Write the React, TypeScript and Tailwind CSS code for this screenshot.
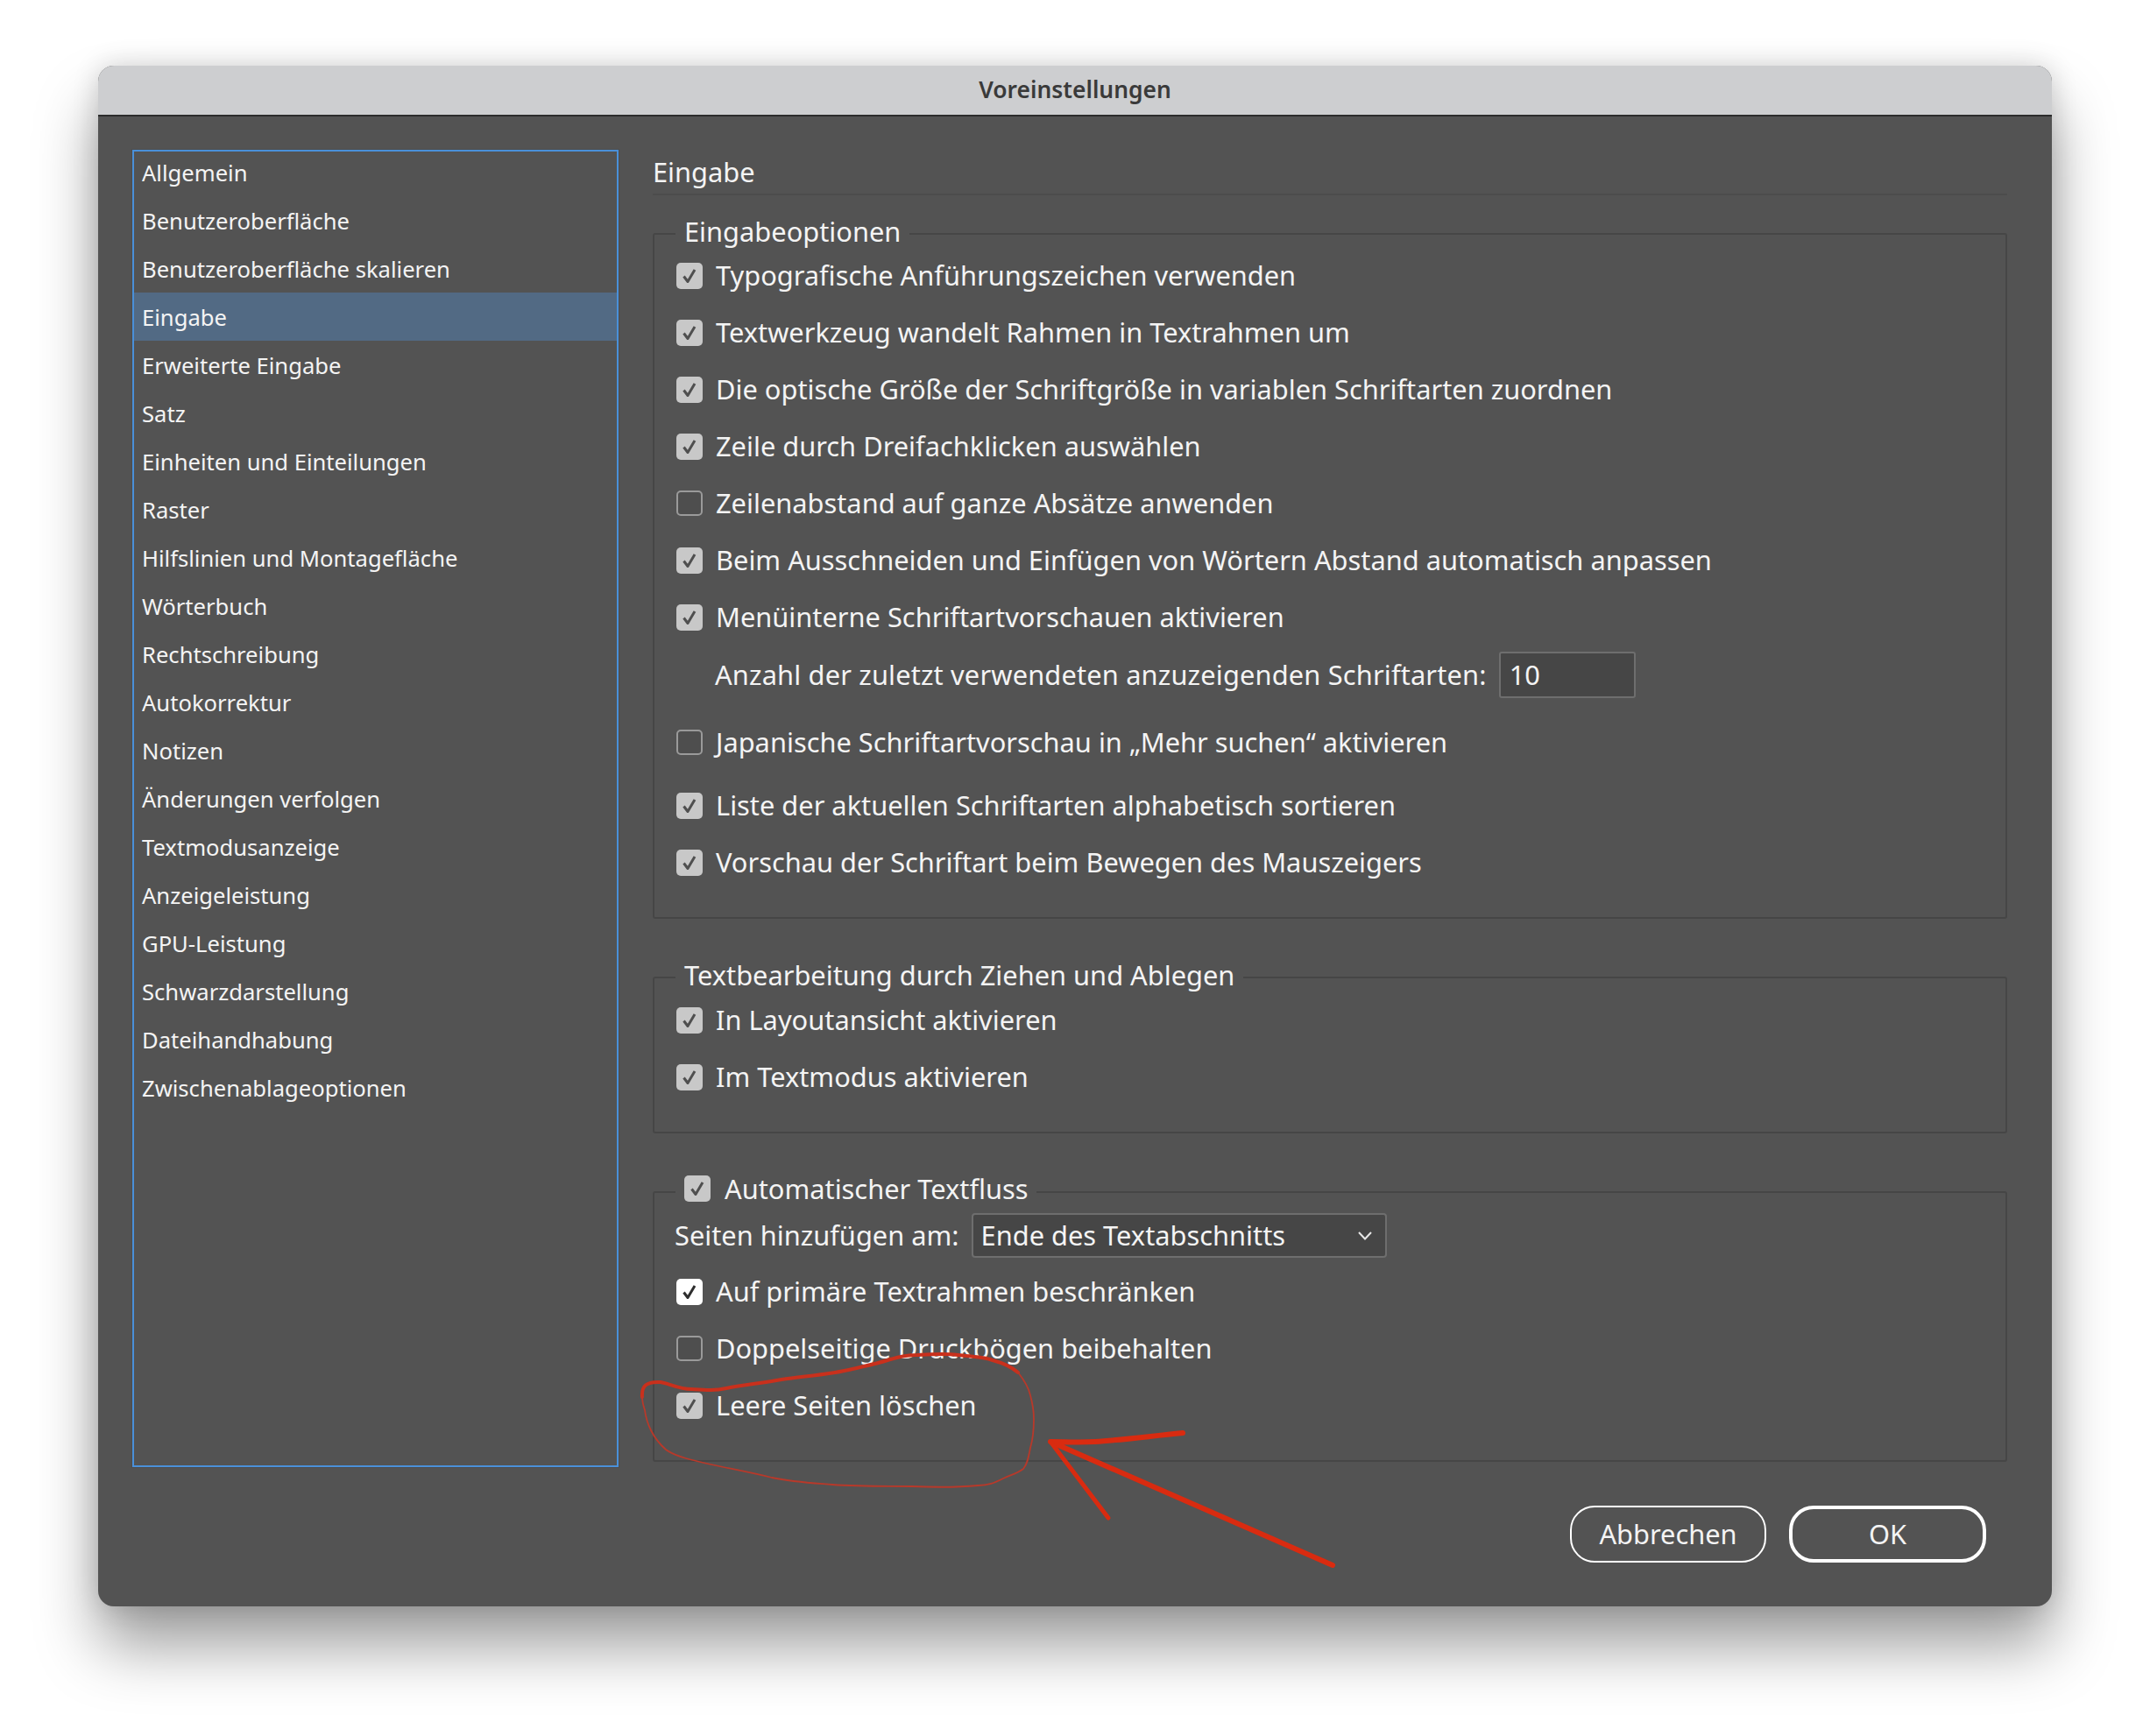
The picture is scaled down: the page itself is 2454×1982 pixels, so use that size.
const SECTIONS = [
  'Allgemein',
  'Benutzeroberfläche',
  'Benutzeroberfläche skalieren',
  'Eingabe',
  'Erweiterte Eingabe',
  'Satz',
  'Einheiten und Einteilungen',
  'Raster',
  'Hilfslinien und Montagefläche',
  'Wörterbuch',
  'Rechtschreibung',
  'Autokorrektur',
  'Notizen',
  'Änderungen verfolgen',
  'Textmodusanzeige',
  'Anzeigeleistung',
  'GPU-Leistung',
  'Schwarzdarstellung',
  'Dateihandhabung',
  'Zwischenablageoptionen',
];

type BoxState = 'on' | 'off' | 'active';

function CheckBox({ state }: { state: BoxState }) {
  if (state === 'off') {
    return <span className="h-[29px] w-[30px] shrink-0 rounded-[5px] border-2 border-[#9a9a9a] bg-[#4e4e4e]" />;
  }
  const active = state === 'active';
  return (
    <span className={`flex h-[30px] w-[30px] shrink-0 items-center justify-center rounded-[5px] ${active ? 'bg-white' : 'bg-[#c8c8c8]'}`}>
      <svg width="20" height="20" viewBox="0 0 20 20" fill="none">
        <path
          d="M3.5 10.5 L8 16.5 L16 3"
          stroke={active ? '#2e2e2e' : '#4f4f4f'}
          strokeWidth="3"
          strokeLinejoin="round"
        />
      </svg>
    </span>
  );
}

function CheckRow({ label, state = 'on', className = '' }: { label: string; state?: BoxState; className?: string }) {
  return (
    <div className={`flex h-[65px] items-center gap-[15px] pl-[25px] ${className}`}>
      <CheckBox state={state} />
      <span>{label}</span>
    </div>
  );
}

function Group({ legend, className, children }: { legend: React.ReactNode; className: string; children: React.ReactNode }) {
  return (
    <fieldset className={`rounded-[3px] border-2 border-[#464646] ${className}`}>
      <legend className="ml-[24px] h-[30px] px-[10px] leading-[24px]">{legend}</legend>
      {children}
    </fieldset>
  );
}

export default function App() {
  return (
    <div className="relative h-[1982px] w-[2454px] overflow-hidden bg-white pl-[112px] pt-[75px] font-['Noto_Sans',sans-serif] text-[30.8px] text-[#f4f4f4]">
      <div className="flex h-[1759px] w-[2230px] flex-col overflow-hidden rounded-[18px] bg-[#535353] shadow-[0_46px_70px_rgba(0,0,0,0.38),0_0_30px_rgba(0,0,0,0.16)]">
        <div className="flex h-[58px] shrink-0 items-center justify-center border-b-2 border-[#2c2c2c] bg-[#cdced0] text-[26.4px] font-semibold text-[#3a3a3a]">
          Voreinstellungen
        </div>

        <div className="flex flex-1 gap-[39px] pl-[39px] pt-[38px]">
          <ul className="h-[1504px] w-[555px] shrink-0 overflow-hidden border-2 border-[#4a90d9] text-[25.6px] ring-1 ring-[#4d4d4d]">
            {SECTIONS.map((name, i) => (
              <li
                key={name}
                className={`flex h-[55px] items-center pl-[9px] pt-[3px] ${i === 0 ? '-mt-[4px]' : ''} ${name === 'Eingabe' ? 'bg-[#526a84]' : ''}`}
              >
                {name}
              </li>
            ))}
          </ul>

          <div className="w-[1546px]">
            <div className="flex h-[52px] items-center border-b-2 border-[#4c4c4c]">Eingabe</div>

            <Group legend="Eingabeoptionen" className="mt-[29px] h-[797px]">
              <CheckRow label="Typografische Anführungszeichen verwenden" />
              <CheckRow label="Textwerkzeug wandelt Rahmen in Textrahmen um" />
              <CheckRow label="Die optische Größe der Schriftgröße in variablen Schriftarten zuordnen" />
              <CheckRow label="Zeile durch Dreifachklicken auswählen" />
              <CheckRow label="Zeilenabstand auf ganze Absätze anwenden" state="off" />
              <CheckRow label="Beim Ausschneiden und Einfügen von Wörtern Abstand automatisch anpassen" />
              <CheckRow label="Menüinterne Schriftartvorschauen aktivieren" />
              <div className="mt-[1px] flex h-[64px] items-center gap-[14px] pl-[69px]">
                <span className="tracking-[0.16px]">Anzahl der zuletzt verwendeten anzuzeigenden Schriftarten:</span>
                <div className="flex h-[53px] w-[156px] items-center rounded-[3px] border-2 border-[#6e6e6e] bg-[#464646] pl-[10px]">10</div>
              </div>
              <CheckRow label="Japanische Schriftartvorschau in „Mehr suchen“ aktivieren" state="off" className="mt-[13px]" />
              <CheckRow label="Liste der aktuellen Schriftarten alphabetisch sortieren" className="mt-[7px]" />
              <CheckRow label="Vorschau der Schriftart beim Bewegen des Mauszeigers" />
            </Group>

            <Group legend="Textbearbeitung durch Ziehen und Ablegen" className="mt-[52px] h-[193px]">
              <CheckRow label="In Layoutansicht aktivieren" className="mt-[1px]" />
              <CheckRow label="Im Textmodus aktivieren" />
            </Group>

            <Group
              legend={
                <span className="relative -top-[4px] flex items-center gap-[16px]">
                  <CheckBox state="on" />
                  Automatischer Textfluss
                </span>
              }
              className="mt-[52px] h-[323px]"
            >
              <div className="mt-[9px] flex h-[51px] items-center gap-[14px] pl-[23px]">
                <span>Seiten hinzufügen am:</span>
                <div className="flex h-[51px] w-[474px] items-center justify-between rounded-[4px] border-2 border-[#6e6e6e] bg-[#464646] pl-[9px] pr-[14px]">
                  <span>Ende des Textabschnitts</span>
                  <svg width="18" height="12" viewBox="0 0 18 12" fill="none">
                    <path d="M2 2 L9 9.5 L16 2" stroke="#e8e8e8" strokeWidth="2" />
                  </svg>
                </div>
              </div>
              <CheckRow label="Auf primäre Textrahmen beschränken" state="active" className="mt-[6px]" />
              <CheckRow label="Doppelseitige Druckbögen beibehalten" state="off" />
              <CheckRow label="Leere Seiten löschen" />
            </Group>

            <div className="mt-[50px] flex justify-end gap-[26px] pr-[24px]">
              <button className="h-[65px] w-[224px] rounded-[28px] border-2 border-white">Abbrechen</button>
              <button className="h-[65px] w-[225px] rounded-[28px] border-4 border-white">OK</button>
            </div>
          </div>
        </div>
      </div>

      {/* freehand annotation drawn over the screenshot */}
      <svg className="absolute left-0 top-0" width="2454" height="1982" viewBox="0 0 2454 1982" fill="none" strokeLinecap="round" strokeLinejoin="round">
        <path
          d="M733 1595 C732 1582 738 1577 754 1578 C765 1580 775 1586 789 1586 C805 1587 815 1588 829 1585 C850 1581 870 1579 892 1575 C920 1571 950 1569 973 1563 C990 1559 1000 1557 1013 1553 C1025 1549 1035 1547 1047 1547 C1065 1546 1078 1545 1093 1547 C1110 1549 1122 1549 1133 1553 C1148 1557 1155 1561 1162 1567"
          stroke="#c9301c"
          strokeWidth="4"
        />
        <path
          d="M1162 1567 C1170 1577 1174 1584 1176 1593 C1179 1604 1180 1611 1180 1620 C1180 1633 1179 1643 1176 1653 C1174 1663 1173 1671 1168 1677 C1160 1683 1153 1684 1145 1688 C1135 1693 1128 1696 1116 1696 C1095 1698 1065 1698 1041 1697 C1010 1697 980 1697 950 1695 C925 1693 905 1692 881 1687 C845 1678 815 1674 783 1665 C773 1662 767 1660 760 1655 C752 1648 747 1641 743 1633 C739 1625 737 1618 736 1610 C734 1604 733 1600 733 1595"
          stroke="#b8392a"
          strokeWidth="1.8"
        />
        <path d="M1350 1636 C1310 1640 1280 1644 1250 1646 C1230 1647 1214 1646 1199 1646 L1521 1787" stroke="#d92b10" strokeWidth="6" />
        <path d="M1199 1646 L1265 1733" stroke="#d92b10" strokeWidth="5" />
      </svg>
    </div>
  );
}
